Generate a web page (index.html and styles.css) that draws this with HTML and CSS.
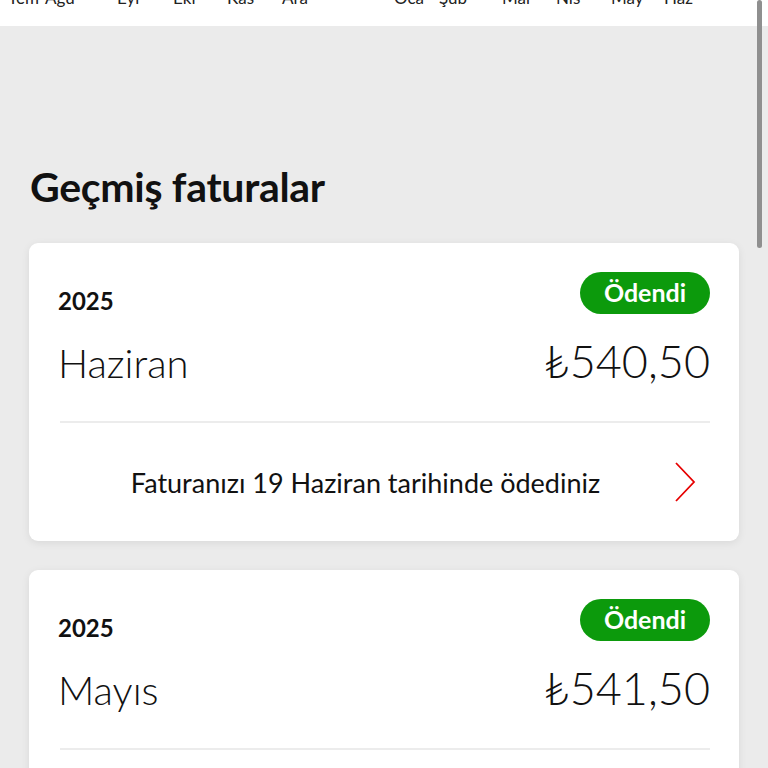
FILE: index.html
```html
<!DOCTYPE html>
<html lang="tr">
<head>
<meta charset="utf-8">
<link rel="stylesheet" href="styles.css">
</head>
<body>
<div class="axis">
  <span>Tem</span><span>Ağu</span><span>Eyl</span><span>Eki</span><span>Kas</span><span>Ara</span>
  <span>Oca</span><span>Şub</span><span>Mar</span><span>Nis</span><span>May</span><span>Haz</span>
</div>
<main class="content">
  <h1 class="title">Geçmiş faturalar</h1>
  <section class="card">
    <div class="top-row">
      <span class="year">2025</span>
      <span class="badge">Ödendi</span>
    </div>
    <div class="main-row">
      <span class="month">Haziran</span>
      <span class="amount">₺540,50</span>
    </div>
    <div class="divider"></div>
    <div class="foot-row">
      <span class="note">Faturanızı 19 Haziran tarihinde ödediniz</span>
      <svg class="chev" width="24" height="42" viewBox="0 0 24 42"><path d="M3 2 L21 21 L3 40" fill="none" stroke="#e60000" stroke-width="1.8"/></svg>
    </div>
  </section>
  <section class="card">
    <div class="top-row">
      <span class="year">2025</span>
      <span class="badge">Ödendi</span>
    </div>
    <div class="main-row">
      <span class="month">Mayıs</span>
      <span class="amount">₺541,50</span>
    </div>
    <div class="divider"></div>
    <div class="foot-row">
      <span class="note">Faturanızı 19 Mayıs tarihinde ödediniz</span>
      <svg class="chev" width="24" height="42" viewBox="0 0 24 42"><path d="M3 2 L21 21 L3 40" fill="none" stroke="#e60000" stroke-width="1.8"/></svg>
    </div>
  </section>
</main>
<div class="scrollbar"></div>
</body>
</html>
```
FILE: styles.css
```css
* { box-sizing: border-box; }
html, body { margin: 0; padding: 0; }
body {
  background: #ebebeb;
  font-family: Lato, "Noto Sans", "DejaVu Sans", sans-serif;
  color: #111;
  height: 768px;
  overflow: hidden;
}
.axis {
  background: #fff;
  height: 26px;
  display: grid;
  grid-template-columns: 8px 37px 72px 56px 54px 55px 112px 45px 63px 54px 55px 53px 60px;
  font-size: 17px;
  line-height: 17px;
  color: #222;
  overflow: hidden;
}
.axis span { margin-top: -11px; white-space: nowrap; }
.axis span:first-child { grid-column: 2; }
.content {
  padding: 0 29px 0 29px;
  display: flex;
  flex-direction: column;
}
.title {
  margin: 136px 0 0 1px;
  font-size: 41px;
  line-height: 50px;
  font-weight: 700;
  letter-spacing: -0.3px;
  color: #111;
}
.card {
  background: #fff;
  border-radius: 9px;
  box-shadow: 0 2px 8px rgba(0,0,0,0.08);
  padding: 29px 29px 0 29px;
  margin-top: 31px;
  display: flex;
  flex-direction: column;
}
.card + .card { margin-top: 29px; }
.top-row {
  display: flex;
  justify-content: space-between;
  align-items: flex-end;
  height: 42px;
}
.year {
  font-size: 24px;
  font-weight: 700;
  line-height: 24px;
  margin-bottom: 1px;
}
.badge {
  background: #0c9a0c;
  color: #fff;
  font-size: 25px;
  font-weight: 700;
  height: 42px;
  line-height: 40px;
  border-radius: 21px;
  width: 130px;
  text-align: center;
}
.main-row {
  display: flex;
  justify-content: space-between;
  align-items: baseline;
  margin-top: 22px;
  height: 60px;
}
.month {
  font-size: 40px;
  font-weight: 300;
  line-height: 50px;
}
.amount {
  font-size: 45px;
  font-weight: 300;
  line-height: 50px;
}
.divider {
  height: 2px;
  background: #ececec;
  margin: 25px 0 0 2px;
}
.foot-row {
  display: flex;
  align-items: center;
  height: 118px;
}
.note {
  flex: 1;
  text-align: center;
  font-size: 27px;
  font-weight: 400;
  color: #111;
  white-space: nowrap;
}
.chev { margin: 0 13px 0 0; }
.scrollbar {
  position: absolute;
  top: 0;
  left: 757px;
  width: 5px;
  height: 248px;
  background: #8f8f8f;
  border-radius: 3px;
}
```
